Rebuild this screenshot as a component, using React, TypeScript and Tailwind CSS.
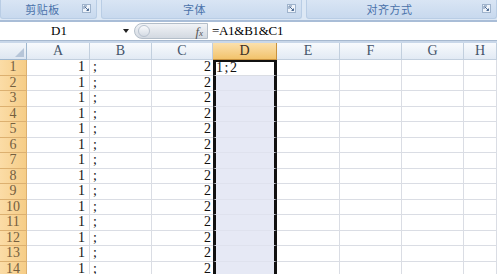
import React from "react";

const cols = ["A", "B", "C", "D", "E", "F", "G", "H"];
const rows = Array.from({ length: 14 }, (_, i) => i + 1);

function Launcher() {
  return (
    <span className="w-[9px] h-[9px] border border-[#9fb3cc] bg-[#eef3fa] flex items-start justify-start">
      <svg width="7" height="7" viewBox="0 0 7 7">
        <path d="M1 1 H4 M1 1 V4" stroke="#6d86a8" strokeWidth="1" fill="none" />
        <path d="M2 2 L5.5 5.5 M5.5 3.5 V5.5 H3.5" stroke="#4d6a93" strokeWidth="1" fill="none" />
      </svg>
    </span>
  );
}

function Group({ label, className }: { label: string; className: string }) {
  return (
    <div
      className={
        "relative flex items-center justify-center h-[19px] rounded-b-[3px] border-x border-b border-[#b9cde5] bg-gradient-to-b from-[#d9e5f4] to-[#c8d9ee] " +
        className
      }
    >
      <span className="text-[11px] text-[#4a72aa] tracking-[0.5px]">{label}</span>
      <span className="absolute right-[5px] top-[4px]">
        <Launcher />
      </span>
    </div>
  );
}

export default function App() {
  return (
    <div className="w-[497px] h-[274px] overflow-hidden bg-white font-['Noto_Sans_CJK_SC',sans-serif] select-none">
      {/* ribbon group labels */}
      <div className="h-[22px] flex gap-[4px] bg-[#dde8f5] border-b-2 border-[#a9bdd7]">
        <Group label="剪贴板" className="w-[97px] pr-[12px]" />
        <Group label="字体" className="w-[201px] pr-[14px]" />
        <Group label="对齐方式" className="flex-1 pr-[24px]" />
      </div>

      {/* formula bar */}
      <div className="h-[18px] flex items-center bg-white font-['Liberation_Serif',serif] text-[13px] text-black">
        <div className="w-[134px] h-full flex items-center relative">
          <span className="flex-1 text-center pr-[16px]">D1</span>
          <span className="absolute right-[5px] top-[7px] w-0 h-0 border-x-[3px] border-x-transparent border-t-[4px] border-t-[#222]" />
        </div>
        <div className="w-[74px] h-[16px] rounded-l-full bg-gradient-to-b from-[#f1f3f6] to-[#d3d9e1] border border-[#b4bec9] flex items-center justify-between pl-[3px] pr-[4px]">
          <span className="w-[12px] h-[12px] rounded-full bg-gradient-to-b from-[#fafbfd] to-[#d4dbe4] border border-[#b8c2cf]" />
          <span className="italic text-[13px] text-[#555] leading-none">
            f<span className="text-[9px]">x</span>
          </span>
        </div>
        <span className="pl-[4px] tracking-[-0.3px]">=A1&amp;B1&amp;C1</span>
      </div>
      <div className="h-[3px] bg-[#c9d7e9] border-t border-[#a6b8cf]" />

      {/* sheet grid */}
      <div className="grid grid-cols-[27px_63px_62px_61px_64px_63px_62px_62px_1fr] grid-rows-[17px] auto-rows-[15.5px] font-['Liberation_Serif',serif] text-[14px] leading-none">
        <div className="relative bg-gradient-to-b from-[#f3f6fa] to-[#dde6f1] border-r border-b border-[#9eb6ce]">
          <span className="absolute right-[2px] bottom-[2px] w-0 h-0 border-l-[9px] border-l-transparent border-b-[9px] border-b-[#b6c5d8]" />
        </div>
        {cols.map((c) => (
          <div
            key={c}
            className={
              c === "D"
                ? "flex items-center justify-center bg-gradient-to-b from-[#fbe0ac] to-[#f2c36b] border-r border-b border-[#c8923e] text-[#3a3026]"
                : "flex items-center justify-center bg-gradient-to-b from-[#f8fafd] to-[#e2eaf4] border-r border-b border-[#c2cfde] text-[#44546a]"
            }
          >
            {c}
          </div>
        ))}
        {rows.map((r) => (
          <React.Fragment key={r}>
            <div className="flex items-center justify-center bg-gradient-to-r from-[#fbdca6] to-[#f6cd87] border-r border-b border-[#dcb070] text-[#75603f]">
              {r}
            </div>
            <div className="flex items-center justify-end pr-[4px] border-r border-b border-[#dadde4] text-[#111]">1</div>
            <div className="flex items-center pl-[3px] border-r border-b border-[#dadde4] text-[#111]">;</div>
            <div className="flex items-center justify-end pr-[2px] border-b border-[#dadde4] text-[#111]">2</div>
            <div
              className={
                "flex items-center border-x-[3px] border-x-[#111] border-b " +
                (r === 1
                  ? "bg-white border-t-2 border-t-[#111] border-b-[#dadde4] text-[#111] tracking-[1.5px]"
                  : "bg-[#e6e9f5] border-b-[#dfe2ee]")
              }
            >
              {r === 1 ? "1;2" : ""}
            </div>
            {["E", "F", "G", "H"].map((c) => (
              <div key={c} className="border-r border-b border-[#dadde4]" />
            ))}
          </React.Fragment>
        ))}
      </div>
    </div>
  );
}
